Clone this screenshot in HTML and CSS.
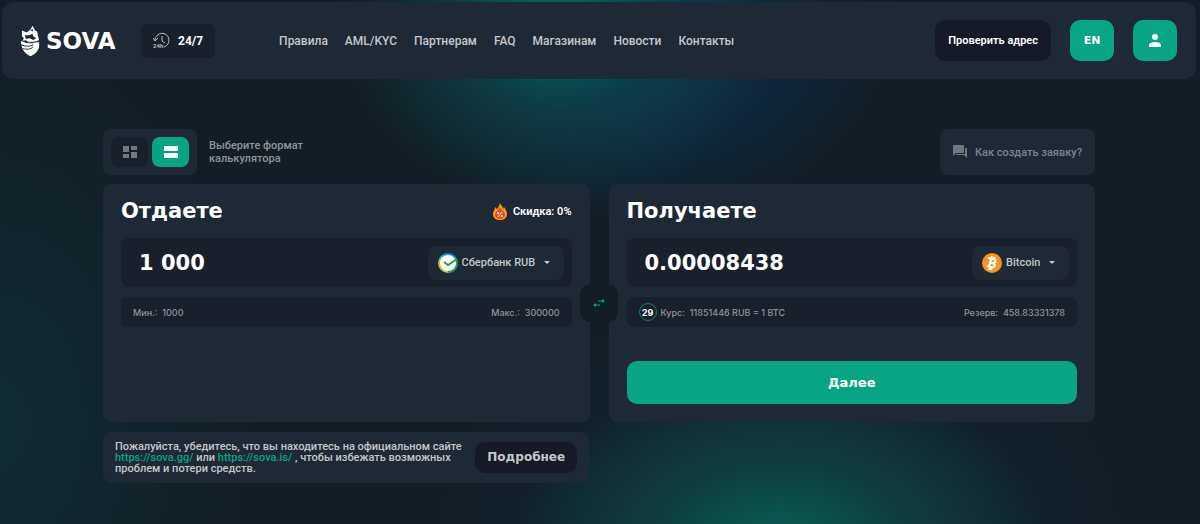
FILE: index.html
```
<!DOCTYPE html>
<html lang="ru">
<head>
  <meta charset="UTF-8" />
  <meta name="viewport" content="width=device-width, initial-scale=1" />
  <title>SOVA</title>
  <link rel="stylesheet" href="styles.css">
</head>
<body>

  <!-- Header -->
  <header class="header">
    <a class="logo" href="#">
      <svg class="logo-icon" viewBox="0 0 20 32" aria-hidden="true">
        <path fill="#fff" d="M1 5l5 2 4-3 2-4 3 5 2 1 1 5 1 4-3 3-5-1-3 1-3-3-4 2 2-4-2-2z"/>
        <path fill="#fff" d="M0 16c6 3 13 3 19 1 1 7-2 12-9 15C3 29 0 23 0 16z"/>
        <path fill="#1f2935" d="M4 10l5 0 3-2 1 3 3 2-3 2-4-2-4 1zM10 5l2-2 1 3z"/>
        <path fill="none" stroke="#1f2935" stroke-width="1" d="M0 15c6 3 12 3 19 1M0 20c5 2 9 2 13 0M2 24c4 1 8 1 11-2"/>
      </svg>
      <span>SOVA</span>
    </a>
    <div class="hours">
      <svg width="17" height="17" viewBox="0 0 17 17" fill="none" stroke="#b9bcc1" aria-hidden="true">
        <path d="M2 8a7 7 0 1 1 9 7M0 6l2 3 3-3M9 4v5l3 2"/>
        <text x="0" y="16" font-size="6" font-weight="700" fill="#b9bcc1" stroke="none">24h</text>
      </svg>
      <span>24/7</span>
    </div>
    <nav class="nav">
      <a href="#">Правила</a>
      <a href="#">AML/KYC</a>
      <a href="#">Партнерам</a>
      <a href="#">FAQ</a>
      <a href="#">Магазинам</a>
      <a href="#">Новости</a>
      <a href="#">Контакты</a>
    </nav>
    <div class="actions">
      <button class="btn-check" type="button">Проверить адрес</button>
      <button class="btn-square" type="button">EN</button>
      <button class="btn-square" type="button" aria-label="Профиль">
        <svg width="12" height="13" viewBox="0 0 12 13" fill="#fff" aria-hidden="true">
          <circle cx="6" cy="3" r="3"/>
          <path d="M0 13v-2c0-2 3-3 6-3s6 1 6 3v2z"/>
        </svg>
      </button>
    </div>
  </header>

  <main class="main">
    <!-- Format switch -->
    <div class="toolbar">
      <div class="switch">
        <button type="button" aria-label="Плитка">
          <svg width="14" height="14" viewBox="0 0 14 14" fill="#73777f" aria-hidden="true">
            <path d="M0 1h6v6H0zM8 1h6v4H8zM0 9h6v4H0zM8 7h6v6H8z"/>
          </svg>
        </button>
        <button class="active" type="button" aria-label="Строки">
          <svg width="14" height="14" viewBox="0 0 14 14" fill="#fff" aria-hidden="true">
            <rect x="0" y="1" width="14" height="5" rx="1"/>
            <rect x="0" y="8" width="14" height="5" rx="1"/>
          </svg>
        </button>
      </div>
      <p class="switch-text">Выберите формат калькулятора</p>
      <a class="help" href="#">
        <svg width="14" height="14" viewBox="0 0 14 14" fill="#73777f" aria-hidden="true">
          <path d="M0 1q0-1 1-1h9q1 0 1 1v6q0 1-1 1H3l-3 3z"/>
          <path d="M12 3h1q1 0 1 1v9l-3-3H4q-1 0-1-1h9z"/>
        </svg>
        Как создать заявку?
      </a>
    </div>

    <!-- Calculator -->
    <div class="calc">
      <section class="card">
        <div class="card-head">
          <h2>Отдаете</h2>
          <div class="discount">
            <svg width="14" height="17" viewBox="0 0 14 17" aria-hidden="true">
              <path fill="#f59a1b" d="M7 0c1 3 3 3 3 6l1-2c2 3 3 5 3 7 0 4-3 6-7 6s-7-2-7-6c0-3 2-4 2-7l2 2c2-2 2-4 3-6z"/>
              <path fill="#ef4a23" d="M7 4c1 3 5 4 5 8 0 2-2 4-5 4s-5-2-5-4c0-3 4-5 5-8z"/>
              <path stroke="#fff" stroke-width="1" d="M5 14l4-5"/>
              <circle cx="5" cy="10" r="1" fill="#fff"/>
              <circle cx="9" cy="13" r="1" fill="#fff"/>
            </svg>
            Скидка: 0%
          </div>
        </div>
        <div class="field">
          <input type="text" value="1 000" aria-label="Отдаете">
          <div class="currency">
            <svg width="20" height="20" viewBox="0 0 20 20" aria-hidden="true">
              <defs>
                <linearGradient id="sber" x1="0" y1="1" x2="1" y2="0">
                  <stop offset="0" stop-color="#e9e421"/>
                  <stop offset="0.35" stop-color="#8fc93a"/>
                  <stop offset="0.6" stop-color="#2199c8"/>
                  <stop offset="1" stop-color="#127bc9"/>
                </linearGradient>
              </defs>
              <circle cx="10" cy="10" r="10" fill="url(#sber)"/>
              <path fill="#21a038" d="M19 6a10 10 0 0 1-9 14v-4z"/>
              <circle cx="10" cy="10" r="8" fill="#fff"/>
              <path fill="none" stroke="#21a038" stroke-width="2" d="M6 9l4 3 9-6"/>
            </svg>
            <select aria-label="Валюта отправки">
              <option>Сбербанк RUB</option>
            </select>
            <svg width="6" height="4" viewBox="0 0 6 4" fill="#c5c7ca" aria-hidden="true"><path d="M0 0h6L3 3z"/></svg>
          </div>
        </div>
        <div class="info">
          <span>Мин.:&nbsp; 1000</span>
          <span>Макс.:&nbsp; 300000</span>
        </div>
      </section>

      <section class="card">
        <div class="card-head">
          <h2>Получаете</h2>
        </div>
        <div class="field">
          <input type="text" value="0.00008438" aria-label="Получаете">
          <div class="currency">
            <svg width="20" height="20" viewBox="0 0 20 20" aria-hidden="true">
              <circle cx="10" cy="10" r="10" fill="#f7931a"/>
              <path fill="none" stroke="#fff" stroke-width="2" d="M6 5l5 1c4 1 3 4-1 4 4 1 4 5-1 4l-4-1M9 6L7 14M8 10h2M10 3l-1 3M13 4l-1 2M8 14l-1 3M10 14l-1 3"/>
            </svg>
            <select aria-label="Валюта получения">
              <option>Bitcoin</option>
            </select>
            <svg width="6" height="4" viewBox="0 0 6 4" fill="#c5c7ca" aria-hidden="true"><path d="M0 0h6L3 3z"/></svg>
          </div>
        </div>
        <div class="info">
          <span class="rate"><b class="timer">29</b>Курс:&nbsp; 11851446 RUB = 1 BTC</span>
          <span>Резерв:&nbsp; 458.83331378</span>
        </div>
        <button class="btn-next" type="button">Далее</button>
      </section>

      <button class="swap" type="button" aria-label="Поменять местами">
        <svg width="12" height="8" viewBox="0 0 12 8" fill="#07a583" stroke="#07a583" aria-hidden="true">
          <path d="M5 2h5M2 6h5"/>
          <path stroke="none" d="M9 0l3 2-3 2zM3 4L0 6l3 2z"/>
        </svg>
      </button>
    </div>

    <!-- Official site warning -->
    <div class="notice">
      <p>Пожалуйста, убедитесь, что вы находитесь на официальном сайте <a href="#">https://sova.gg/</a> или <a href="#">https://sova.is/</a> , чтобы избежать возможных проблем и потери средств.</p>
      <button type="button">Подробнее</button>
    </div>
  </main>

</body>
</html>
```
FILE: styles.css
```
* {
  box-sizing: border-box;
}

body {
  margin: 0;
  padding: 2px 4px 40px 2px;
  min-height: 100vh;
  font-family: Roboto, 'Liberation Sans', sans-serif;
  font-size: 12px;
  font-weight: 500;
  color: #c5c7ca;
  background:
    radial-gradient(ellipse 220px 190px at 555px 20px, rgba(5, 110, 98, 0.9), rgba(12, 80, 75, 0.45) 50%, transparent),
    radial-gradient(ellipse 260px 200px at 640px 30px, rgba(4, 60, 105, 0.7), transparent),
    radial-gradient(ellipse 270px 180px at 780px 550px, rgba(8, 104, 88, 0.9), rgba(12, 78, 70, 0.6) 50%, transparent),
    radial-gradient(ellipse 360px 240px at 780px 524px, rgba(18, 42, 62, 0.8), transparent),
    radial-gradient(ellipse 260px 400px at 0 424px, rgba(16, 52, 58, 0.6), transparent),
    #131d25;
}

button,
input,
select {
  font: inherit;
  color: inherit;
  border: none;
  outline: none;
}

button {
  padding: 0;
  cursor: pointer;
}

a {
  color: inherit;
  text-decoration: none;
}

p,
h2 {
  margin: 0;
}

svg {
  flex: none;
}

/* Header */
.header {
  display: flex;
  align-items: center;
  padding: 18px 19px;
  background-color: #1f2935;
  border-radius: 12px;
}

.logo {
  display: flex;
  align-items: center;
  gap: 6px;
  width: 120px;
  font-family: 'DejaVu Sans', sans-serif;
  font-size: 23px;
  font-weight: bold;
  color: #fff;
}

.logo-icon {
  width: 19px;
  height: 32px;
}

.hours {
  display: flex;
  align-items: center;
  gap: 8px;
  height: 34px;
  padding: 0 12px;
  margin-right: 64px;
  font-weight: 700;
  color: #fff;
  background-color: #191f2b;
  border-radius: 6px;
}

.nav {
  display: flex;
  gap: 17px;
}

.actions {
  display: flex;
  gap: 19px;
  margin-left: auto;
}

.btn-check,
.btn-square {
  height: 41px;
  color: #fff;
  border-radius: 10px;
}

.btn-check {
  padding: 0 13px;
  font-size: 11px;
  font-weight: 600;
  background-color: #151a26;
}

.btn-square {
  display: flex;
  align-items: center;
  justify-content: center;
  width: 44px;
  font-family: 'DejaVu Sans', sans-serif;
  font-size: 11px;
  font-weight: bold;
  background-color: #07a583;
}

.main {
  max-width: 992px;
  margin: 50px auto 0;
}

/* Format switch */
.toolbar {
  display: flex;
  align-items: center;
  gap: 12px;
  margin-bottom: 9px;
}

.switch {
  display: flex;
  gap: 4px;
  padding: 8px;
  background-color: #1f2935;
  border-radius: 8px;
}

.switch button {
  display: flex;
  align-items: center;
  justify-content: center;
  width: 37px;
  height: 30px;
  background-color: #191f2b;
  border-radius: 8px;
}

.switch .active {
  background-color: #07a583;
}

.switch-text {
  width: 120px;
  font-size: 11px;
  line-height: 13px;
  color: #90959b;
}

.help {
  display: flex;
  align-items: center;
  gap: 8px;
  height: 46px;
  padding: 0 13px;
  margin-left: auto;
  font-size: 11px;
  color: #7f848b;
  background-color: #1f2935;
  border-radius: 8px;
}

/* Calculator */
.calc {
  position: relative;
  display: grid;
  grid-template-columns: repeat(2, minmax(0, 1fr));
  gap: 19px;
  margin-bottom: 10px;
}

.card {
  display: flex;
  flex-direction: column;
  min-height: 238px;
  padding: 18px;
  background-color: #1f2935;
  border-radius: 8px;
}

.card-head {
  display: flex;
  align-items: center;
  justify-content: space-between;
  height: 18px;
  margin-bottom: 18px;
  color: #fff;
}

.card-head h2 {
  font-family: 'DejaVu Sans', sans-serif;
  font-size: 21px;
  font-weight: bold;
}

.discount {
  display: flex;
  align-items: center;
  gap: 6px;
  font-size: 11px;
  font-weight: 600;
}

.field {
  display: flex;
  align-items: center;
  height: 49px;
  padding: 0 8px 0 18px;
  margin-bottom: 10px;
  background-color: #191f2b;
  border-radius: 8px;
}

.field input {
  flex: 1;
  min-width: 0;
  padding: 0;
  font-family: 'DejaVu Sans', sans-serif;
  font-size: 21px;
  font-weight: bold;
  color: #fff;
  background: none;
}

.currency {
  display: flex;
  align-items: center;
  height: 34px;
  padding: 0 14px 0 10px;
  background-color: #1f2935;
  border-radius: 8px;
}

.currency select {
  padding: 0;
  margin: 0 8px 0 4px;
  font-size: 11px;
  appearance: none;
  background: none;
}

.info {
  display: flex;
  align-items: center;
  justify-content: space-between;
  height: 30px;
  padding: 0 12px;
  font-family: Inter, sans-serif;
  font-size: 9px;
  color: #90959b;
  background-color: #191f2b;
  border-radius: 6px;
}

.rate {
  display: flex;
  align-items: center;
  gap: 4px;
}

.timer {
  display: flex;
  align-items: center;
  justify-content: center;
  width: 18px;
  height: 18px;
  color: #fff;
  border: 1px solid #07856c;
  border-radius: 50%;
}

.btn-next {
  height: 43px;
  margin-top: auto;
  font-family: 'DejaVu Sans', sans-serif;
  font-size: 13px;
  font-weight: bold;
  color: #fff;
  background-color: #07a583;
  border-radius: 10px;
}

/* Sits over the gap between the two cards */
.swap {
  position: absolute;
  top: 50%;
  left: 50%;
  display: flex;
  align-items: center;
  justify-content: center;
  width: 38px;
  height: 38px;
  background-color: #131d25;
  border-radius: 10px;
  transform: translate(-50%, -50%);
}

/* Warning */
.notice {
  display: flex;
  align-items: center;
  justify-content: space-between;
  width: 49%;
  min-height: 51px;
  padding: 8px 12px;
  font-size: 11px;
  line-height: 11px;
  background-color: #1f2935;
  border-radius: 8px;
}

.notice p {
  max-width: 350px;
}

.notice a {
  display: inline-block;
  color: #07a583;
}

.notice button {
  height: 31px;
  padding: 0 12px;
  font-family: 'DejaVu Sans', sans-serif;
  font-size: 12px;
  font-weight: bold;
  background-color: #151a26;
  border-radius: 10px;
}
```
